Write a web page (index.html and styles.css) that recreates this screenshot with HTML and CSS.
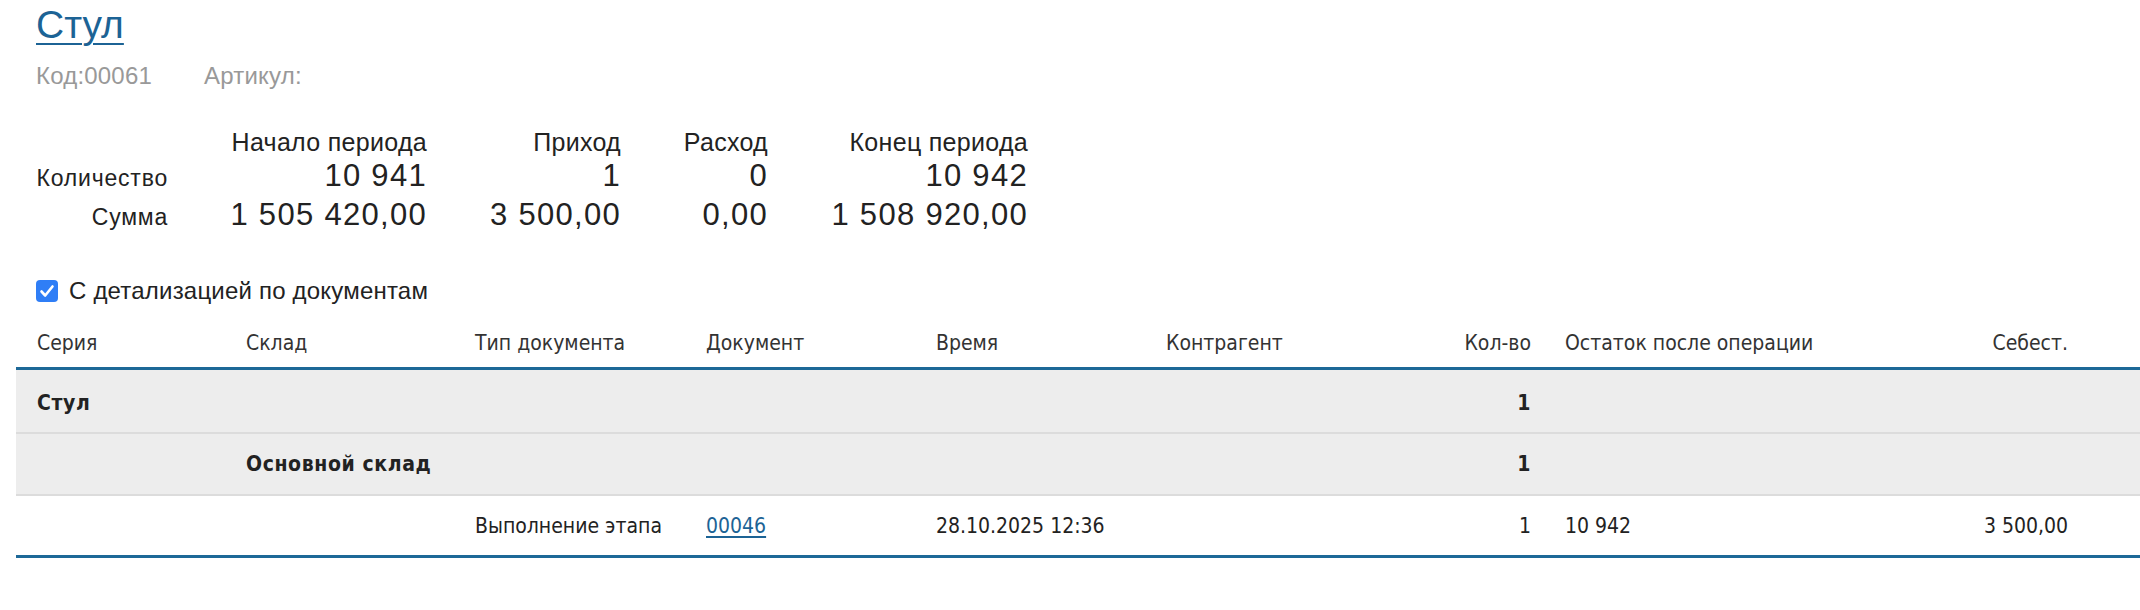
FILE: index.html
```html
<!DOCTYPE html>
<html lang="ru">
<head>
<meta charset="utf-8">
<title>Стул</title>
<link rel="stylesheet" href="styles.css">
</head>
<body>
<div class="head">
  <h1 class="title"><a href="#">Стул</a></h1>
  <div class="meta"><span>Код:00061</span><span>Артикул:</span></div>
  <div class="summary">
    <div></div>
    <div class="sh">Начало периода</div>
    <div class="sh">Приход</div>
    <div class="sh">Расход</div>
    <div class="sh">Конец периода</div>
    <div class="sl">Количество</div>
    <div class="sn">10 941</div>
    <div class="sn">1</div>
    <div class="sn">0</div>
    <div class="sn">10 942</div>
    <div class="sl">Сумма</div>
    <div class="sn">1 505 420,00</div>
    <div class="sn">3 500,00</div>
    <div class="sn">0,00</div>
    <div class="sn">1 508 920,00</div>
  </div>
  <label class="filter">
    <span class="cb"><svg width="22" height="22" viewBox="0 0 22 22"><rect x="0" y="0" width="22" height="22" rx="4" fill="#2f7ef6"/><path d="M5.5 11.5 L9.2 15.5 L16.5 6.5" fill="none" stroke="#fff" stroke-width="2.6" stroke-linecap="round" stroke-linejoin="round"/></svg></span>
    <span>С детализацией по документам</span>
  </label>
</div>
<div class="grid">
  <div class="row hdr">
    <div>Серия</div><div>Склад</div><div>Тип документа</div><div>Документ</div><div>Время</div><div>Контрагент</div><div class="r">Кол-во</div><div class="rest">Остаток после операции</div><div class="r">Себест.</div>
  </div>
  <div class="row grp g1">
    <div>Стул</div><div></div><div></div><div></div><div></div><div></div><div class="r">1</div><div class="rest"></div><div class="r"></div>
  </div>
  <div class="row grp g2">
    <div></div><div>Основной склад</div><div></div><div></div><div></div><div></div><div class="r">1</div><div class="rest"></div><div class="r"></div>
  </div>
  <div class="row item">
    <div></div><div></div><div>Выполнение этапа</div><div><a href="#">00046</a></div><div>28.10.2025 12:36</div><div></div><div class="r">1</div><div class="rest">10 942</div><div class="r">3 500,00</div>
  </div>
</div>
</body>
</html>
```

FILE: styles.css
```css
html, body {
  margin: 0;
  padding: 0;
  background: #fff;
}
body {
  font-family: "Liberation Sans", Arial, sans-serif;
  color: #222;
}
.head {
  padding-left: 36px;
}
.title {
  margin: 0;
  font-size: 39px;
  line-height: 50px;
  font-weight: normal;
}
.title a {
  color: #1c6395;
  text-decoration: underline;
  text-decoration-thickness: 2px;
  text-underline-offset: 5px;
}
.meta {
  margin-top: 13px;
  display: flex;
  gap: 52px;
  font-size: 24px;
  letter-spacing: 0.2px;
  line-height: 26px;
  color: #999;
}
.summary {
  margin-top: 39px;
  display: grid;
  grid-template-columns: 132px 259px 194px 147px 260px;
  grid-template-rows: 32px 39px 32px;
  align-items: baseline;
  justify-items: end;
  color: #222;
}
.sh {
  font-size: 25px;
  letter-spacing: 0.3px;
  line-height: 28px;
}
.sl {
  font-size: 23px;
  letter-spacing: 0.8px;
  line-height: 32px;
}
.sn {
  font-size: 31px;
  letter-spacing: 1.3px;
  line-height: 32px;
}
.filter {
  margin-top: 45px;
  height: 30px;
  display: flex;
  align-items: center;
  gap: 11px;
  font-size: 24px;
  letter-spacing: 0.2px;
  color: #222;
}
.cb {
  display: flex;
  width: 22px;
  height: 22px;
}
.grid {
  margin-top: 13px;
  margin-left: 16px;
  font-family: "DejaVu Sans Condensed", "DejaVu Sans", sans-serif;
  font-stretch: condensed;
  font-size: 21px;
  color: #222;
}
.row {
  display: grid;
  grid-template-columns: 209px 229px 231px 230px 230px 234px 131px 319px 218px;
  padding-left: 21px;
  align-items: center;
  white-space: nowrap;
}
.row .r {
  text-align: right;
}
.row .rest {
  padding-left: 34px;
}
.hdr {
  height: 48px;
  border-bottom: 3px solid #1d6897;
  color: #333;
}
.grp {
  background: #ededed;
  font-weight: bold;
  letter-spacing: 0.6px;
  border-bottom: 2px solid #dcdcdc;
}
.g1 {
  box-sizing: border-box;
  height: 64px;
  padding-top: 4px;
}
.g2 {
  height: 60px;
}
.item {
  height: 59px;
  border-bottom: 3px solid #1d6897;
}
.item a {
  color: #1c6395;
  text-decoration: underline;
  text-underline-offset: 3px;
}
```
